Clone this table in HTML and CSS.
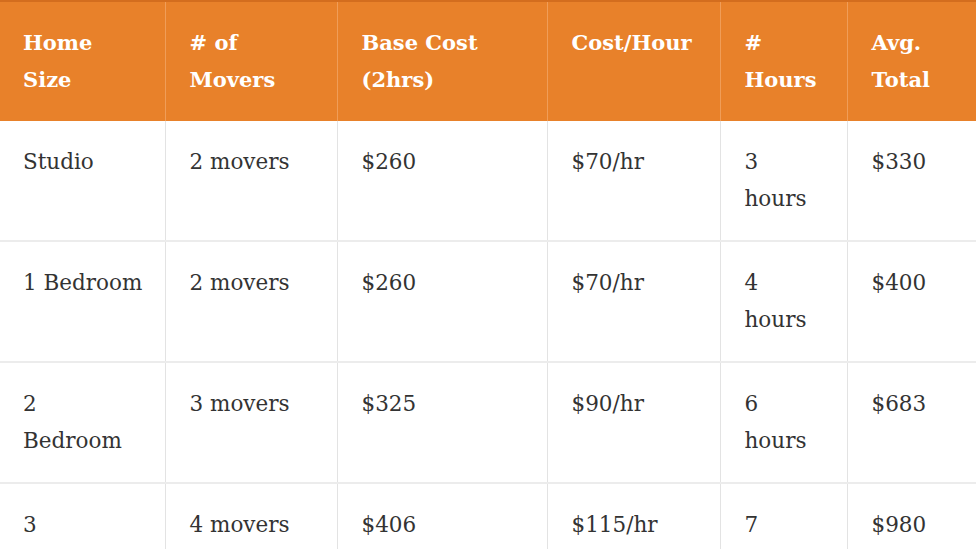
FILE: index.html
```html
<!DOCTYPE html>
<html>
<head>
<meta charset="utf-8">
<link rel="stylesheet" href="styles.css">
</head>
<body>
<table class="rates">
  <colgroup>
    <col class="c1"><col class="c2"><col class="c3"><col class="c4"><col class="c5"><col class="c6">
  </colgroup>
  <thead>
    <tr>
      <th>Home Size</th>
      <th># of Movers</th>
      <th>Base Cost (2hrs)</th>
      <th>Cost/Hour</th>
      <th># Hours</th>
      <th>Avg. Total</th>
    </tr>
  </thead>
  <tbody>
    <tr><td>Studio</td><td>2 movers</td><td>$260</td><td>$70/hr</td><td>3 hours</td><td>$330</td></tr>
    <tr><td class="nowrap">1 Bedroom</td><td>2 movers</td><td>$260</td><td>$70/hr</td><td>4 hours</td><td>$400</td></tr>
    <tr><td>2<br>Bedroom</td><td>3 movers</td><td>$325</td><td>$90/hr</td><td>6 hours</td><td>$683</td></tr>
    <tr><td>3<br>Bedroom</td><td>4 movers</td><td>$406</td><td>$115/hr</td><td>7 hours</td><td>$980</td></tr>
  </tbody>
</table>
</body>
</html>
```
FILE: styles.css
```css
html, body {
  margin: 0;
  padding: 0;
  background: #ffffff;
  overflow: hidden;
}
.rates {
  border-collapse: collapse;
  table-layout: fixed;
  width: 1000px;
  font-family: "DejaVu Serif", serif;
  font-size: 21.5px;
  line-height: 36.5px;
  color: #333333;
  border-top: 2px solid #d36d1e;
}
.c1 { width: 165px; }
.c2 { width: 172px; }
.c3 { width: 210px; }
.c4 { width: 173px; }
.c5 { width: 127px; }
.c6 { width: 153px; }
.rates th {
  background: #e8812a;
  color: #ffffff;
  font-weight: bold;
  font-size: 21px;
  text-align: left;
  vertical-align: top;
  padding: 23px 24px 23px 24px;
  border-left: 1px solid #f09d58;
  height: 73px;
}
.rates th:first-child,
.rates td:first-child {
  border-left: none;
  padding-left: 23px;
}
.rates td {
  vertical-align: top;
  padding: 23px 24px 23px 24px;
  border-left: 1px solid #e3e3e3;
  border-top: 2px solid #ececec;
  height: 73px;
}
.rates td.nowrap {
  white-space: nowrap;
}
.rates tbody tr:first-child td {
  border-top: none;
}
```
